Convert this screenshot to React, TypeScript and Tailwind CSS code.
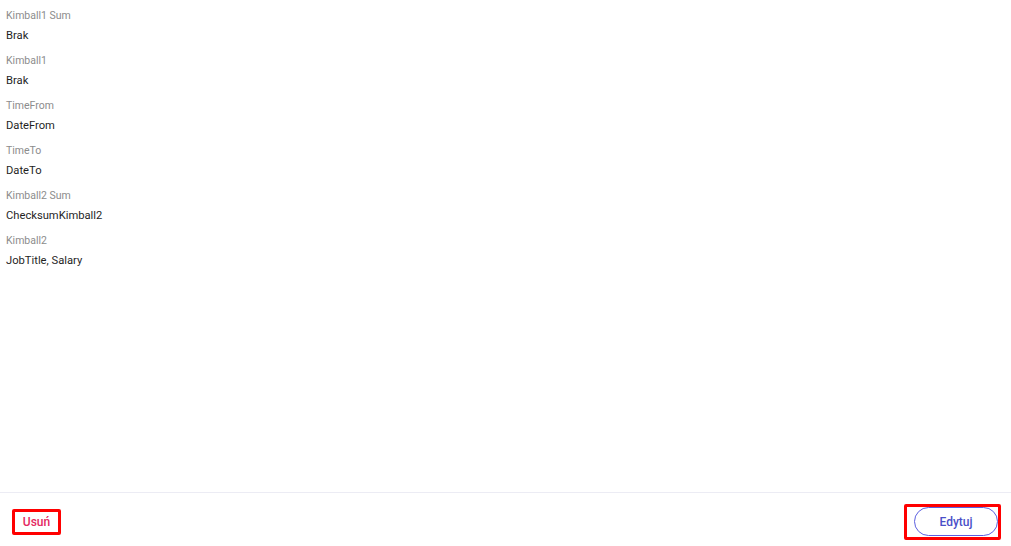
const fields = [
  { label: "Kimball1 Sum", value: "Brak" },
  { label: "Kimball1", value: "Brak" },
  { label: "TimeFrom", value: "DateFrom" },
  { label: "TimeTo", value: "DateTo" },
  { label: "Kimball2 Sum", value: "ChecksumKimball2" },
  { label: "Kimball2", value: "JobTitle, Salary" },
];

export default function App() {
  return (
    <div
      className="flex h-[546px] w-full flex-col bg-white"
      style={{ fontFamily: "Roboto, 'Liberation Sans', sans-serif" }}
    >
      {/* details */}
      <div className="flex-1 px-[6px] pt-[6px]">
        {fields.map((f) => (
          <div key={f.label} className="mb-[5px]">
            <div className="h-[20px] text-[10.5px] leading-[20px] text-[#8c8c8c]">{f.label}</div>
            <div className="h-[20px] text-[11.2px] leading-[20px] text-[#1f1f1f]">{f.value}</div>
          </div>
        ))}
      </div>

      {/* footer */}
      <div className="flex h-[54px] items-center justify-between border-t border-[#ececf4] pl-[12px] pr-[10px] pt-[4px]">
        <div className="flex h-[26px] w-[49px] items-center justify-center rounded-[2px] border-[3px] border-[#ff0000]">
          <button className="text-[12px] font-medium text-[#e4285f]">Usuń</button>
        </div>
        <div className="flex h-[36px] w-[97px] items-center rounded-[2px] border-[3px] border-[#ff0000] pl-[7px]">
          <button className="flex h-[29px] w-[85px] items-center justify-center rounded-full border border-[#5b5fe0] text-[12px] font-medium text-[#4a4fc8]">
            Edytuj
          </button>
        </div>
      </div>
    </div>
  );
}
